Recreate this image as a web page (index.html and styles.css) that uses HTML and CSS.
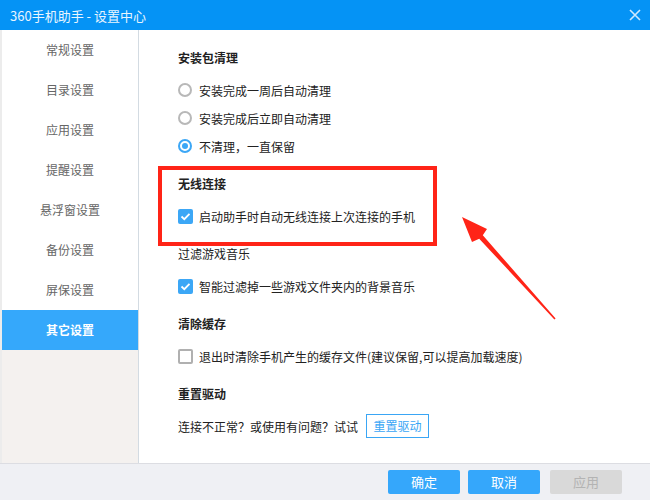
FILE: index.html
```html
<!doctype html>
<html>
<head>
<meta charset="UTF-8">
<title>360手机助手 - 设置中心</title>
<link rel="stylesheet" href="styles.css">
</head>
<body>
<div class="win">
	<div class="titlebar">
		<span class="title">360手机助手 - 设置中心</span>
		<svg class="close" width="12" height="12" viewBox="0 0 12 12"><path d="M1 1L11 11M11 1L1 11" stroke="#cfe9fd" stroke-width="1.6"/></svg>
	</div>
	<div class="main">
		<ul class="side">
			<li>常规设置</li>
			<li>目录设置</li>
			<li>应用设置</li>
			<li>提醒设置</li>
			<li>悬浮窗设置</li>
			<li>备份设置</li>
			<li>屏保设置</li>
			<li class="on">其它设置</li>
		</ul>
		<div class="content">
			<div class="sec">
				<h3>安装包清理</h3>
				<div class="row"><span class="radio"></span>安装完成一周后自动清理</div>
				<div class="row"><span class="radio"></span>安装完成后立即自动清理</div>
				<div class="row"><span class="radio checked"></span>不清理，一直保留</div>
			</div>
			<div class="sec mark">
				<div class="redbox"></div>
				<h3>无线连接</h3>
				<div class="row"><span class="chk checked"><svg width="15" height="15" viewBox="0 0 15 15"><path d="M3.5 7.5L6.3 10.2L11.5 4.8" fill="none" stroke="#fff" stroke-width="1.8"/></svg></span>启动助手时自动无线连接上次连接的手机</div>
			</div>
			<div class="sec">
				<h3 class="plain">过滤游戏音乐</h3>
				<div class="row"><span class="chk checked"><svg width="15" height="15" viewBox="0 0 15 15"><path d="M3.5 7.5L6.3 10.2L11.5 4.8" fill="none" stroke="#fff" stroke-width="1.8"/></svg></span>智能过滤掉一些游戏文件夹内的背景音乐</div>
			</div>
			<div class="sec">
				<h3>清除缓存</h3>
				<div class="row"><span class="chk"></span>退出时清除手机产生的缓存文件(建议保留,可以提高加载速度)</div>
			</div>
			<div class="sec">
				<h3>重置驱动</h3>
				<div class="row">连接不正常？或使用有问题？试试<span class="btn-line">重置驱动</span></div>
			</div>
			<!-- 标注箭头 -->
			<svg class="arrow" width="110" height="120" viewBox="0 0 110 120">
				<polygon points="12,12 37,24 32.8,30.3 105.6,113.4 104.4,114.6 29.2,33.7 22,37" fill="#ff2417"/>
			</svg>
		</div>
	</div>
	<div class="foot">
		<span class="btn">确定</span>
		<span class="btn">取消</span>
		<span class="btn dis">应用</span>
	</div>
</div>
</body>
</html>
```
FILE: styles.css
```css
*{margin:0;padding:0;box-sizing:border-box}
body{font-family:"Noto Sans CJK SC","Liberation Sans",sans-serif;font-size:12px;color:#222;background:#fff}
.win{width:650px;height:500px;display:flex;flex-direction:column;position:relative}
.titlebar{height:30px;background:#0593f5;display:flex;align-items:center;justify-content:space-between;padding:0 10px 0 10px}
.title{color:#e8f5ff;font-size:13px}
.close{margin-right:-1px}
.main{flex:1;display:flex;min-height:0}
.side{list-style:none;width:139px;background:#f4f1ef;border-left:2px solid #ececec;border-right:1px solid #d3dbe2}
.side li{height:40px;line-height:40px;text-align:center;color:#666;background:#fff}
.side li.on{background:#35a8fb;color:#fff;font-weight:bold}
.content{flex:1;padding:18px 0 0 39px;position:relative}
.sec{margin-bottom:14px;position:relative}
h3{font-size:12px;line-height:20px;height:20px;margin-bottom:8px;font-weight:bold}
h3.plain{font-weight:normal}
.row{height:28px;display:flex;align-items:center}
.radio{width:14px;height:14px;border:2px solid #b8b8b8;border-radius:50%;margin-right:7px;position:relative}
.radio.checked{border-color:#3ca7f6}
.radio.checked:after{content:"";position:absolute;left:2px;top:2px;width:6px;height:6px;border-radius:50%;background:#3ca7f6}
.chk{width:15px;height:15px;border:2px solid #b0b0b0;border-radius:2px;margin-right:6px;display:flex}
.chk.checked{background:#3ca7f6;border:none}
.btn-line{display:inline-block;margin-left:8px;width:63px;height:24px;line-height:22px;border:1px solid #3aa6f5;color:#3aa6f5;text-align:center}
.redbox{position:absolute;left:-20px;top:-8px;width:279px;height:80px;border:4px solid #ff2417}
.arrow{position:absolute;left:311px;top:175px}
.foot{height:37px;background:#eff0f4;border-top:1px solid #dcdde2;display:flex;justify-content:flex-end;gap:8px;padding:6px 28px 0 0}
.btn{width:72px;height:24px;line-height:24px;text-align:center;background:#35a7fb;color:#fff;border-radius:2px;font-size:13px}
.btn.dis{background:#d9d9d9;color:#b3b3b3;margin-left:2px}
```
